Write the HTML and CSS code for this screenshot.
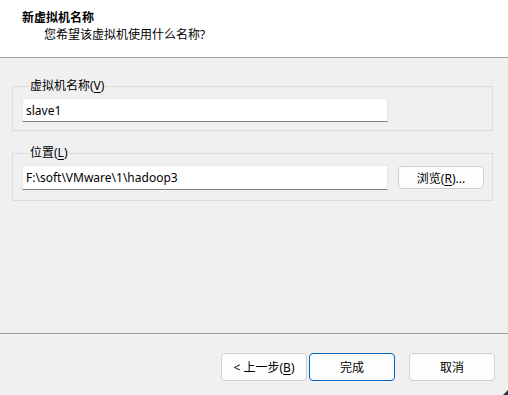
FILE: index.html
```html
<!DOCTYPE html>
<html lang="zh-CN">
<head>
    <meta charset="UTF-8">
    <title>新建虚拟机向导</title>
    <link rel="stylesheet" href="styles.css">
</head>

<body>
    <div class="wizard">
        <div class="header">
            <h1>新虚拟机名称</h1>
            <p>您希望该虚拟机使用什么名称?</p>
        </div>

        <div class="content">
            <fieldset class="group">
                <legend>虚拟机名称(<u>V</u>)</legend>
                <div class="row">
                    <input type="text" class="field" value="slave1">
                </div>
            </fieldset>

            <fieldset class="group group-location">
                <legend>位置(<u>L</u>)</legend>
                <div class="row">
                    <input type="text" class="field" value="F:\soft\VMware\1\hadoop3">
                    <button class="btn btn-browse">浏览(<u>R</u>)...</button>
                </div>
            </fieldset>
        </div>

        <div class="footer">
            <button class="btn">&lt; 上一步(<u>B</u>)</button>
            <button class="btn btn-default">完成</button>
            <button class="btn btn-cancel">取消</button>
        </div>

        <span class="grip"></span>
    </div>
</body>
</html>
```

FILE: styles.css
```css
/* Wizard page colours */
:root {
    --face: #f0f0f0;
    --white: #ffffff;
    --line: #a0a0a0;
    --group-line: #dcdcdc;
    --btn-line: #d0d0d0;
    --accent: #0067c0;
    --text: #000000;
}

body {
    margin: 0;
    font-family: "Noto Sans", "Noto Sans CJK SC", sans-serif;
    font-size: 12px;
    color: var(--text);
    background: var(--face);
}

.wizard {
    width: 508px;
    height: 395px;
    display: flex;
    flex-direction: column;
    position: relative;
    overflow: hidden;
}

/* Header band */
.header {
    height: 58px;
    box-sizing: border-box;
    background: var(--white);
    border-bottom: 1px solid var(--line);
    padding: 10px 0 0 22px;
}

.header h1 {
    margin: 0;
    font-size: 12px;
    font-weight: 700;
    line-height: 16px;
}

.header p {
    margin: 0;
    padding: 1px 0 0 22px;
    line-height: 16px;
}

/* Group boxes */
.content {
    flex: 1;
    padding: 20px 15px 0 12px;
}

.group {
    margin: 0;
    padding: 4px 8px 8px 9px;
    border: 1px solid var(--group-line);
    min-width: 0;
}

.group legend {
    padding: 0 1px;
    margin-left: 7px;
    line-height: 16px;
}

.group-location {
    margin-top: 14px;
    padding-bottom: 10px;
}

.row {
    display: flex;
    align-items: center;
    gap: 10px;
}

.field {
    width: 366px;
    height: 24px;
    box-sizing: border-box;
    margin: 0;
    padding: 0 3px;
    border: 1px solid #e8e8e8;
    border-bottom-color: #838383;
    border-radius: 0;
    background: var(--white);
    font-family: inherit;
    font-size: 12px;
    color: var(--text);
    outline: none;
}

.group-location .field {
    height: 25px;
}

/* Buttons */
.btn {
    width: 86px;
    height: 28px;
    box-sizing: border-box;
    margin: 0;
    padding: 0;
    border: 1px solid var(--btn-line);
    border-radius: 4px;
    background: #fdfdfd;
    font-family: inherit;
    font-size: 12px;
    color: var(--text);
}

.btn-browse {
    height: 23px;
}

.btn-default {
    border-color: var(--accent);
}

.footer {
    height: 62px;
    box-sizing: border-box;
    border-top: 1px solid var(--line);
    display: flex;
    justify-content: flex-end;
    gap: 2px;
    padding: 19px 13px 0 0;
}

.footer .btn-cancel {
    margin-left: 12px;
}

u {
    text-decoration-thickness: 1px;
    text-underline-offset: 2px;
}

/* Resize grip in the corner */
.grip {
    position: absolute;
    right: 0;
    bottom: 0;
    width: 0;
    height: 0;
    border-left: 5px solid transparent;
    border-bottom: 5px solid #333;
}
```
